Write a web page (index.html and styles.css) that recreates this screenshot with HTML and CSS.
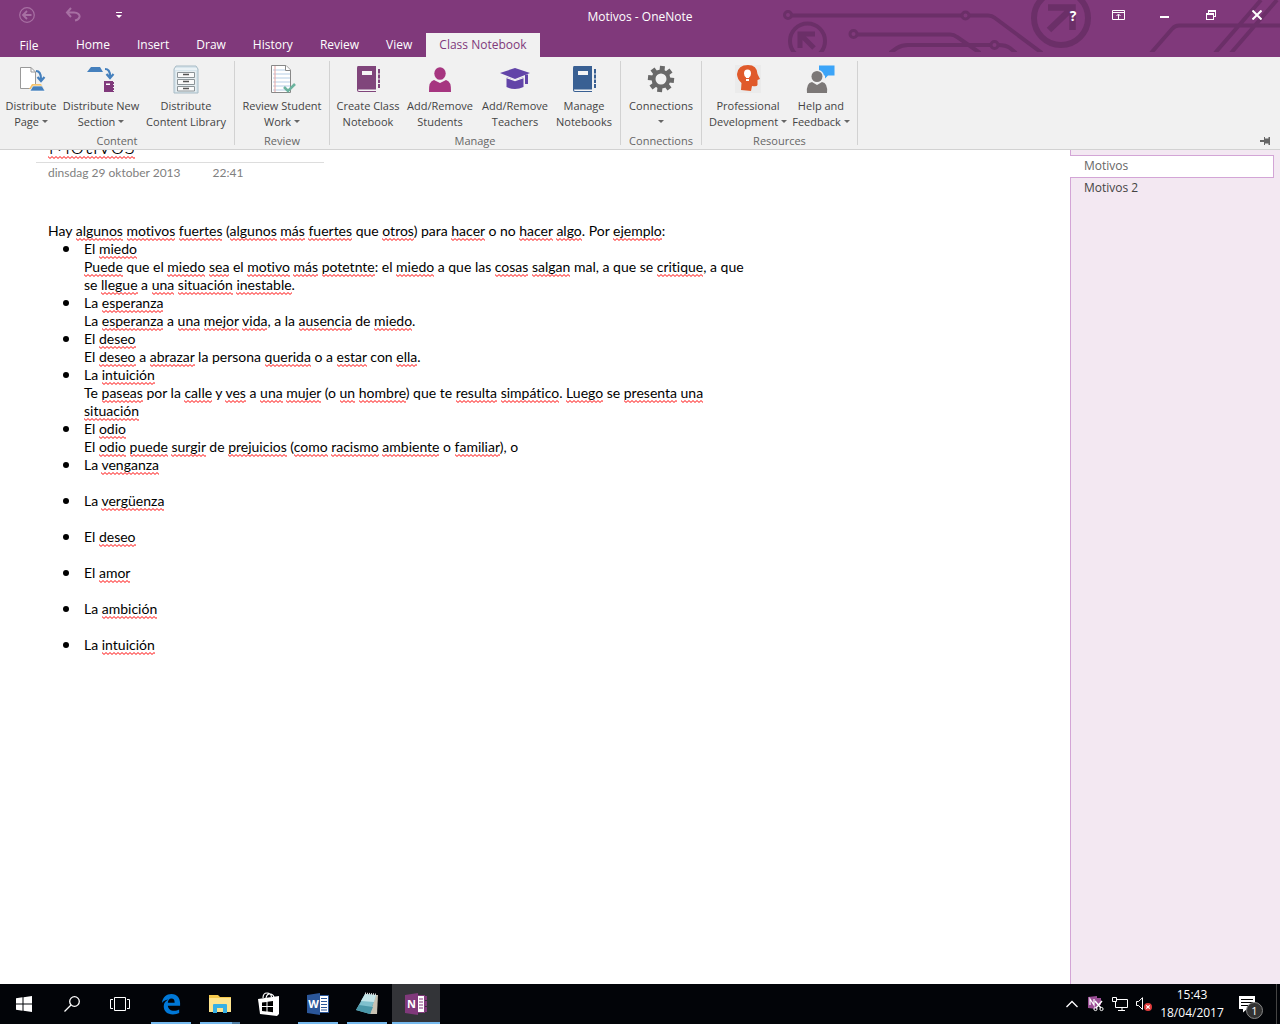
FILE: index.html
```
<!DOCTYPE html>
<html lang="es">
<head>
  <meta charset="UTF-8">
  <meta name="viewport" content="width=device-width, initial-scale=1.0">
  <title>Motivos - OneNote</title>
  <link rel="stylesheet" href="styles.css">
</head>
<body>
  <header class="window-header">
    <svg class="circuit" width="500" height="52" viewBox="780 0 500 52" fill="none" stroke="#6b2f68" stroke-width="4">
      <circle cx="788" cy="15" r="3.5" stroke-width="3"/>
      <path d="M792 15.500H961M969 15.500H988Q992 15.500 995 18L1042 53"/>
      <circle cx="965.500" cy="15.500" r="3.500" stroke-width="3"/>
      <circle cx="853.500" cy="34" r="3.500" stroke-width="3"/>
      <path d="M857 34.500H950Q954 34.500 957 37L980 53"/>
      <path d="M890 53L897 48Q902 45 908 45H990M998 45Q1006 45 1010 48L1016 53"/>
      <circle cx="994.500" cy="45" r="3.500" stroke-width="3"/>
      <circle cx="807.500" cy="41" r="17.500"/>
      <path d="M800 48V34H815M801 35L814 48" stroke-width="5"/>
      <circle cx="1061" cy="18" r="27" stroke-width="6"/>
      <path d="M1048 7.500H1072.500V30M1072 8L1049 30" stroke-width="6.500"/>
      <path d="M1151 53L1172 29Q1175 25.500 1179 25.500H1280M1215 53L1261 0M1231 53L1277 0"/>
    </svg>
    <div class="title-bar">
      <div class="quick-access">
        <button class="bar-button" type="button" aria-label="Back">
          <svg width="16" height="16" viewBox="0 0 16 16" fill="none" stroke="#a770a3"><circle cx="8" cy="8" r="7.300" stroke-width="1.200"/><path d="M12.500 8H4.500M8 4L4 8L8 12" stroke-width="1.800"/></svg>
        </button>
        <button class="bar-button" type="button" aria-label="Undo">
          <svg width="16" height="16" viewBox="0 0 16 16" fill="none" stroke="#a770a3" stroke-width="2"><path d="M6 1L2 5.500L6 10M2 5.500H9C13 5.500 15 8 14.500 10C14 12 12.500 13 10 13.500"/></svg>
        </button>
        <button class="bar-button" type="button" aria-label="Customize Quick Access Toolbar">
          <svg width="6" height="6" viewBox="0 0 6 6" fill="#fff"><path d="M0 0H6V1H0zM0 3H6L3 6z"/></svg>
        </button>
      </div>
      <h1 class="window-title">Motivos - OneNote</h1>
      <div class="window-buttons">
        <button class="bar-button help" type="button">?</button>
        <button class="bar-button" type="button" aria-label="Ribbon Display Options">
          <svg width="14" height="10" viewBox="0 0 14 10" fill="none" stroke="#fff"><path d="M.5.500H12.500V9.500H.5zM0 2.500H13M6.500 9V4.500M4.500 6L6.500 4L8.500 6"/></svg>
        </button>
        <button class="bar-button" type="button" aria-label="Minimize">
          <svg width="10" height="10" viewBox="0 0 10 10" fill="#fff"><path d="M0 6H9V8H0z"/></svg>
        </button>
        <button class="bar-button" type="button" aria-label="Restore Down">
          <svg width="10" height="10" viewBox="0 0 10 10" fill="#fff"><path d="M2 0H10V7H8V6H9V2H3V3H2zM0 3H8V10H0zM1 5V9H7V5z" fill-rule="evenodd"/></svg>
        </button>
        <button class="bar-button" type="button" aria-label="Close">
          <svg width="10" height="10" viewBox="0 0 10 10" stroke="#fff" stroke-width="2"><path d="M.5.500L9.500 9.500M9.500.500L.5 9.500"/></svg>
        </button>
      </div>
    </div>
    <nav class="tabs">
      <button class="tab file" type="button">File</button>
      <button class="tab" type="button">Home</button>
      <button class="tab" type="button">Insert</button>
      <button class="tab" type="button">Draw</button>
      <button class="tab" type="button">History</button>
      <button class="tab" type="button">Review</button>
      <button class="tab" type="button">View</button>
      <button class="tab active" type="button">Class Notebook</button>
    </nav>
  </header>

  <section class="ribbon">
    <div class="group content">
      <div class="commands">
        <button class="command" type="button">
          <svg width="30" height="30" viewBox="0 0 30 30"><path d="M4.500 2.500H15L19.500 7V23.500H4.500z" fill="#fff" stroke="#999"/><path d="M15 2.500V7H19.500" fill="none" stroke="#999"/><path d="M20 6Q25 6 25 14M21.500 12L25 16L28.500 12" fill="none" stroke="#4580bd" stroke-width="2.200"/><path d="M16 19H25L28 24H13z" fill="#f5c36b"/><path d="M17 21H26L29 26H14z" fill="#4580bd" stroke="#fff" stroke-width=".6"/></svg>
          <span>Distribute<br>Page <i class="arrow"></i></span>
        </button>
        <button class="command" type="button">
          <svg width="30" height="30" viewBox="0 0 30 30"><path d="M5 2H14L17 7H1z" fill="#4580bd"/><path d="M19 4Q24 4 24 11M20.500 9L24 13L27.500 9" fill="none" stroke="#4580bd" stroke-width="2.200"/><path d="M18 16H27V27H18z" fill="#80397b"/><path d="M20 18.500H24V20H20z" fill="#fff"/><path d="M27.500 17V27" stroke="#80397b" stroke-dasharray="2 1"/></svg>
          <span>Distribute New<br>Section <i class="arrow"></i></span>
        </button>
        <button class="command" type="button">
          <svg width="30" height="30" viewBox="0 0 30 30"><path d="M5 1H25L27 4V28H3V4z" fill="#d7e5ec" stroke="#a9bcc6"/><path d="M4 4H26" stroke="#fff"/><path d="M5 6H25V27H5z" fill="#e7eef1"/><path d="M6.500 7.500H23.500V12.500H6.500zM6.500 14.500H23.500V19.500H6.500zM6.500 21.500H23.500V26H6.500z" fill="#fafafa" stroke="#8c9498"/><path d="M12 9.500H18M12 16.500H18M12 23.500H18" stroke="#555" stroke-width="1.500"/></svg>
          <span>Distribute<br>Content Library</span>
        </button>
      </div>
      <h2 class="group-name">Content</h2>
    </div>
    <div class="group review">
      <div class="commands">
        <button class="command" type="button">
          <svg width="30" height="30" viewBox="0 0 30 30"><path d="M4.500.500H19L23.500 5V27.500H4.500z" fill="#fff" stroke="#888"/><path d="M6 5H18M6 9H23M6 13H23M6 17H23M6 21H23M6 25H23" stroke="#b5cde5"/><path d="M8 1V27" stroke="#e5a5a5"/><path d="M18.500.500V5.500H23.500" fill="#fff" stroke="#888"/><path d="M17 22L21 26L28 19" fill="none" stroke="#6bb39e" stroke-width="2.600"/></svg>
          <span>Review Student<br>Work <i class="arrow"></i></span>
        </button>
      </div>
      <h2 class="group-name">Review</h2>
    </div>
    <div class="group manage">
      <div class="commands">
        <button class="command" type="button">
          <svg width="30" height="30" viewBox="0 0 30 30"><path d="M5 1H23V27H6Q4 27 4 25V3Q4 1 5 1z" fill="#80457b"/><path d="M9 6H19V10H9zM5 24.500H23V26H6Q5 26 5 24.500z" fill="#f5f5f5"/><path d="M26 4V8.500M26 9.500V13.500M26 14.500V18M26 19V23" stroke="#80457b" stroke-width="2"/></svg>
          <span>Create Class<br>Notebook</span>
        </button>
        <button class="command" type="button">
          <svg width="30" height="30" viewBox="0 0 30 30" fill="#a63680"><ellipse cx="15" cy="8.500" rx="5.700" ry="6.300"/><path d="M4 27Q3.500 16 9 15L15 18L21 15Q26.500 16 26 27z"/></svg>
          <span>Add/Remove<br>Students</span>
        </button>
        <button class="command" type="button">
          <svg width="30" height="30" viewBox="0 0 30 30" fill="#6244a8"><path d="M0 8L15 3L30 8L15 14z"/><path d="M6.500 12L15 15.500L23.500 12V22Q15 26 6.500 22z"/><path d="M25 9.500H28V19H25z"/><path d="M6 12.500L15 15.500L24 12.500" fill="none" stroke="#f1f1f1" stroke-width="1.200"/></svg>
          <span>Add/Remove<br>Teachers</span>
        </button>
        <button class="command" type="button">
          <svg width="30" height="30" viewBox="0 0 30 30"><path d="M5 1H23V27H6Q4 27 4 25V3Q4 1 5 1z" fill="#396093"/><path d="M9 6H19V10H9zM5 24.500H23V26H6Q5 26 5 24.500z" fill="#f5f5f5"/><path d="M26 4V8.500M26 9.500V13.500M26 14.500V18M26 19V23" stroke="#396093" stroke-width="2"/></svg>
          <span>Manage<br>Notebooks</span>
        </button>
      </div>
      <h2 class="group-name">Manage</h2>
    </div>
    <div class="group connections">
      <div class="commands">
        <button class="command" type="button">
          <svg width="30" height="30" viewBox="0 0 30 30" stroke="#696969"><circle cx="15" cy="14" r="7.500" fill="none" stroke-width="4"/><g stroke-width="5"><path d="M16.500 1L16 6M13.500 27L14 22M2 12.500L7 13M28 15.500L23 15M6.500 4L9.500 8M23.500 24L20.500 20M25 5.500L21 8.500M5 22.500L9 19.500"/></g></svg>
          <span>Connections<br><i class="arrow"></i></span>
        </button>
      </div>
      <h2 class="group-name">Connections</h2>
    </div>
    <div class="group resources">
      <div class="commands">
        <button class="command" type="button">
          <svg width="30" height="30" viewBox="0 0 30 30"><path d="M2 0H28V28H2z" fill="#ebebeb"/><path d="M8 25L8.500 18Q4 14 4 9Q5 0 15 0Q24 0 24.500 9L27 14L24.500 15V20Q24 22 19 21L18 26z" fill="#e05a2b"/><path d="M13 12.500Q11 11 11 8.500Q11 4.500 14.500 4.500Q18 4.500 18 8.500Q18 11 16 12.500V16H13z" fill="#fff"/><path d="M13 13.500H16" stroke="#e05a2b"/></svg>
          <span>Professional<br>Development <i class="arrow"></i></span>
        </button>
        <button class="command" type="button">
          <svg width="30" height="30" viewBox="0 0 30 30"><path d="M13 .5H28.500V10.500H22L19 13.500V10.500H18Q17 6 13 5z" fill="#3ba4f8"/><circle cx="11" cy="11.500" r="5.500" fill="#7c7877"/><path d="M1 28Q0 18 6 17L11 20L16 17Q22 18 21 28z" fill="#7c7877"/></svg>
          <span>Help and<br>Feedback <i class="arrow"></i></span>
        </button>
      </div>
      <h2 class="group-name">Resources</h2>
    </div>
    <button class="pin" type="button" aria-label="Pin the ribbon">
      <svg width="10" height="8" viewBox="0 0 10 8" fill="#666"><path d="M0 3H4V0H5V1.500H8.500V0H10V8H8.500V6.500H5V8H4V5H0z"/></svg>
    </button>
  </section>

  <main class="workspace">
    <article class="page">
      <h2 class="page-title"><u>Motivos</u></h2>
      <p class="page-date"><span>dinsdag 29 oktober 2013</span><span>22:41</span></p>
      <div class="note">
        <p>Hay <u>algunos</u> <u>motivos</u> <u>fuertes</u> (<u>algunos</u> <u>más</u> <u>fuertes</u> que <u>otros</u>) para <u>hacer</u> o no <u>hacer</u> <u>algo</u>. Por <u>ejemplo</u>:</p>
        <ul>
          <li>El <u>miedo</u><br><u>Puede</u> que el <u>miedo</u> <u>sea</u> el <u>motivo</u> <u>más</u> <u>potetnte</u>: el <u>miedo</u> a que las <u>cosas</u> <u>salgan</u> mal, a que se <u>critique</u>, a que<br>se <u>llegue</u> a <u>una</u> <u>situación</u> <u>inestable</u>.</li>
          <li>La <u>esperanza</u><br>La <u>esperanza</u> a <u>una</u> <u>mejor</u> <u>vida</u>, a la <u>ausencia</u> de <u>miedo</u>.</li>
          <li>El <u>deseo</u><br>El <u>deseo</u> a <u>abrazar</u> la persona <u>querida</u> o a <u>estar</u> con <u>ella</u>.</li>
          <li>La <u>intuición</u><br>Te <u>paseas</u> por la <u>calle</u> y <u>ves</u> a <u>una</u> <u>mujer</u> (o <u>un</u> <u>hombre</u>) que te <u>resulta</u> <u>simpático</u>. <u>Luego</u> se <u>presenta</u> <u>una</u><br><u>situación</u></li>
          <li>El <u>odio</u><br>El <u>odio</u> <u>puede</u> <u>surgir</u> de <u>prejuicios</u> (<u>como</u> <u>racismo</u> <u>ambiente</u> o <u>familiar</u>), o</li>
          <li class="spaced">La <u>venganza</u></li>
          <li class="spaced">La <u>vergüenza</u></li>
          <li class="spaced">El <u>deseo</u></li>
          <li class="spaced">El <u>amor</u></li>
          <li class="spaced">La <u>ambición</u></li>
          <li>La <u>intuición</u></li>
        </ul>
      </div>
    </article>
    <nav class="page-list">
      <a class="page-link current" href="#">Motivos</a>
      <a class="page-link" href="#">Motivos 2</a>
    </nav>
  </main>

  <footer class="taskbar">
    <button class="task" type="button" aria-label="Start">
      <svg width="16" height="16" viewBox="0 0 16 16" fill="#fff"><path d="M0 2.200L6.500 1.300V7.500H0zM7.500 1.200L16 0V7.500H7.500zM0 8.500H6.500V14.700L0 13.800zM7.500 8.500H16V16L7.500 14.800z"/></svg>
    </button>
    <button class="task" type="button" aria-label="Search">
      <svg width="16" height="16" viewBox="0 0 16 16" fill="none" stroke="#fff" stroke-width="1.300"><circle cx="10.500" cy="5.500" r="4.800"/><path d="M7 9L.5 15.500"/></svg>
    </button>
    <button class="task" type="button" aria-label="Task View">
      <svg width="20" height="14" viewBox="0 0 20 14" fill="none" stroke="#fff"><path d="M4.500.500H15.500V13.500H4.500zM3 2.500H.5V11.500H3M17 2.500H19.500V11.500H17"/></svg>
    </button>
    <div class="apps">
      <button class="task open" type="button" aria-label="Microsoft Edge">
        <svg width="20" height="22" viewBox="0 0 22 24" fill="#0078d7"><path d="M1 11C2 4 6 1 11.500 1C18 1 21 6 21 11V14H7.500C8 18 11 19.500 14 19.500C16.500 19.500 18.500 18.800 20 18V22C18 23 16 23.500 13 23.500C7 23.500 3 20 3 14.500C3 11 5 8.500 8 7C4.500 7.500 2.500 9 1 11zM7.500 10.500H15C15 7.500 14 6 11.500 6C9 6 7.800 8 7.500 10.500z"/></svg>
      </button>
      <button class="task open stacked" type="button" aria-label="File Explorer">
        <svg width="22" height="20" viewBox="0 0 22 20"><path d="M0 1H9L11 3H22V18H0z" fill="#f5c94c"/><path d="M0 4H22V18H0z" fill="#fde48e"/><path d="M4 19V11Q4 10 5 10H17Q18 10 18 11V19H14V14H8V19z" fill="#36b0e4"/></svg>
      </button>
      <button class="task" type="button" aria-label="Store">
        <svg width="22" height="24" viewBox="0 0 22 24"><path d="M5 6Q5 1 9 1Q13 1 13.500 5M8 6Q9 1 13 2Q16 3 16 6" fill="none" stroke="#fff" stroke-width="1.200"/><path d="M0 7L21 4V22L19 24L2 22z" fill="#fff"/><path d="M4 10.500L8.500 10V14H4zM9.500 9.800L15 9V14H9.500zM4 15H8.500V19.500L4 19zM9.500 15H15V20.300L9.500 19.600z" fill="#000"/></svg>
      </button>
      <button class="task open" type="button" aria-label="Word">
        <svg width="22" height="22" viewBox="0 0 22 22"><path d="M12 2.500H21.500V19.500H12z" fill="#fff" stroke="#2b579a"/><path d="M14 5.500H20M14 8.500H20M14 11.500H20M14 14.500H20M14 17H20" stroke="#2b579a"/><path d="M0 2L13 0V22L0 20z" fill="#2b579a"/><text class="app-letter" x="6.500" y="15" text-anchor="middle">W</text></svg>
      </button>
      <button class="task open" type="button" aria-label="Notepad">
        <svg width="24" height="24" viewBox="0 0 24 24"><path d="M20 3L23 3L22 22L15 22z" fill="#c8c2b2"/><path d="M10 2L21 3L15 22L1 18z" fill="#7fc0cd"/><path d="M10 2L21 3L19 10L6 9z" fill="#c4e5e9"/><path d="M4 13L18 15L15 22L1 18z" fill="#4a98a9"/><path d="M10 1.500L21 2.500" stroke="#ddd" stroke-width="2" stroke-dasharray="1 1"/></svg>
      </button>
      <button class="task open selected" type="button" aria-label="OneNote">
        <svg width="22" height="22" viewBox="0 0 22 22"><path d="M12 2.500H19.500V19.500H12z" fill="#fff" stroke="#80397b"/><path d="M14 6H18M14 9H18M14 12H18M14 15H18" stroke="#80397b"/><path d="M19 3H22V7H19zM19 8H22V13H19zM19 14H22V19H19z" fill="#80397b"/><path d="M0 2L13 0V22L0 20z" fill="#80397b"/><text class="app-letter" x="6.500" y="15" text-anchor="middle">N</text></svg>
      </button>
    </div>
    <div class="tray">
      <button class="tray-button" type="button" aria-label="Show hidden icons">
        <svg width="12" height="8" viewBox="0 0 12 8" fill="none" stroke="#fff" stroke-width="1.300"><path d="M.5 7L6 1.500L11.500 7"/></svg>
      </button>
      <button class="tray-button" type="button" aria-label="Send to OneNote">
        <svg width="16" height="16" viewBox="0 0 16 16"><path d="M0 1L9 0V13L0 12zM9 2H13V9H9z" fill="#9b4f96"/><path d="M2 9V3L6 9V3" fill="none" stroke="#fff" stroke-width="1.200"/><path d="M7 5L13 12M14 5L8 12" stroke="#fff" stroke-width="1.500"/><circle cx="7.500" cy="13" r="1.600" fill="none" stroke="#fff"/><circle cx="13.500" cy="13" r="1.600" fill="none" stroke="#fff"/></svg>
      </button>
      <button class="tray-button" type="button" aria-label="Network">
        <svg width="16" height="14" viewBox="0 0 16 14" fill="none" stroke="#fff"><path d="M5 2.500H15.500V10.500H3.500V5M10 10.500V13M6 13.500H13M.5.500H4.500V4.500H.5z"/></svg>
      </button>
      <button class="tray-button" type="button" aria-label="Volume muted">
        <svg width="16" height="14" viewBox="0 0 16 14"><path d="M.5 4.500H2.500L6.500.700V12.500L2.500 8.500H.5z" fill="none" stroke="#fff"/><circle cx="12" cy="10" r="4" fill="#e03c3c"/><path d="M10.300 8.300L13.700 11.700M13.700 8.300L10.300 11.700" stroke="#fff" stroke-width="1.200"/></svg>
      </button>
      <time class="clock" datetime="2017-04-18T15:43">15:43<br>18/04/2017</time>
      <button class="notifications" type="button" aria-label="Notifications">
        <svg width="24" height="24" viewBox="0 0 24 24"><path d="M0 4H16V17H8L4 20.500V17H0z" fill="#fff"/><path d="M2 7.500H14M2 10.500H14M2 13.500H10" stroke="#000"/></svg>
        <span class="badge">1</span>
      </button>
    </div>
  </footer>
</body>
</html>
```
FILE: styles.css
```
* {
  box-sizing: border-box;
}
body {
  margin: 0;
  height: 100vh;
  display: flex;
  flex-direction: column;
  font-family: "Open Sans", "Noto Sans", sans-serif;
  font-size: 12px;
  color: #444;
  background: #fff;
  overflow: hidden;
}
button {
  font: inherit;
  color: inherit;
  background: none;
  border: none;
  padding: 0;
  white-space: nowrap;
}
h1, h2, p, ul {
  margin: 0;
  font-weight: normal;
}
svg {
  display: block;
  flex: none;
}

/* title bar and tabs */
.window-header {
  position: relative;
  background: #80397b;
  color: #fff;
}
.circuit {
  position: absolute;
  top: 0;
  right: 0;
}
.title-bar {
  position: relative;
  display: grid;
  grid-template-columns: 1fr auto 1fr;
  align-items: center;
  height: 33px;
}
.quick-access, .window-buttons {
  display: flex;
  height: 30px;
  align-self: start;
}
.quick-access {
  padding-left: 4px;
}
.window-buttons {
  justify-content: flex-end;
}
.bar-button {
  width: 46px;
  display: flex;
  align-items: center;
  justify-content: center;
}
.help {
  font-size: 14px;
  font-weight: bold;
}
.window-title {
  font-size: 12px;
}
.tabs {
  position: relative;
  display: flex;
  gap: 1px;
  height: 24px;
}
.tab {
  padding: 0 13px 2px;
}
.tab.file {
  width: 58px;
  margin-right: 4px;
  padding-bottom: 0;
}
.tab.active {
  background: #f1f1f1;
  color: #80397b;
}

/* ribbon */
.ribbon {
  display: flex;
  padding-top: 4px;
  background: #f1f1f1;
  border-bottom: 1px solid #d2d2d2;
}
.group {
  border-right: 1px solid #d2d2d2;
  height: 84px;
  margin-bottom: 4px;
}
.commands {
  display: grid;
  height: 72px;
  padding-top: 4px;
}
.content .commands {
  grid-template-columns: 56px 84px 86px;
  padding-left: 3px;
  padding-right: 5px;
}
.review .commands {
  grid-template-columns: 94px;
}
.manage .commands {
  grid-template-columns: 72px 72px 78px 60px;
  padding-left: 2px;
  padding-right: 6px;
}
.connections .commands {
  grid-template-columns: 80px;
}
.resources .commands {
  grid-template-columns: 84px 62px;
  padding-left: 4px;
  padding-right: 5px;
}
.command {
  display: flex;
  flex-direction: column;
  align-items: center;
  gap: 3px;
  font-size: 11px;
  line-height: 16px;
}
.arrow {
  display: inline-block;
  vertical-align: 3px;
  border: 3px solid transparent;
  border-top-color: #666;
  border-bottom: none;
}
.group-name {
  font-size: 11px;
  line-height: 16px;
  text-align: center;
  color: #666;
}
.pin {
  margin-left: auto;
  align-self: flex-end;
  padding: 4px 10px;
}

/* page and page list */
.workspace {
  flex: 1;
  min-height: 0;
  display: flex;
  overflow: hidden;
}
.page {
  flex: 1;
  margin-top: -24px;
  padding-left: 48px;
  color: #000;
  font-family: Lato, sans-serif;
  font-variant-ligatures: none;
}
/* spelling marks */
u {
  text-decoration: none;
  padding-bottom: 2px;
  background: url("data:image/svg+xml,%3Csvg xmlns='http://www.w3.org/2000/svg' width='4' height='3'%3E%3Cpath d='M-1 1.5L0 .5L2 2.5L4 .5L5 1.5' fill='none' stroke='red'/%3E%3C/svg%3E") repeat-x left bottom;
}
.page-title {
  width: 288px;
  margin-left: -12px;
  padding-left: 12px;
  height: 37px;
  border-bottom: 1px solid #ddd;
  font-size: 25px;
  font-weight: 300;
  line-height: 36px;
}
.page-title u {
  padding-bottom: 0;
}
.page-date {
  display: flex;
  gap: 32px;
  padding-top: 1px;
  line-height: 18px;
  color: #808080;
}
.note {
  padding-top: 40px;
  font-size: 14px;
  line-height: 18px;
}
.note ul {
  padding-left: 36px;
  list-style: none;
}
.note li::before {
  content: "";
  display: inline-block;
  width: 6px;
  height: 6px;
  margin-left: -21px;
  margin-right: 15px;
  vertical-align: 2px;
  border-radius: 50%;
  background: #000;
}
.spaced {
  margin-bottom: 18px;
}
.page-list {
  width: 210px;
  padding-top: 5px;
  background: #f3e8f2;
  border-left: 1px solid #d3a5d6;
}
.page-link {
  display: block;
  height: 22px;
  margin-right: 6px;
  padding-left: 13px;
  line-height: 20px;
  color: #444;
  text-decoration: none;
}
.page-link.current {
  height: 23px;
  margin-left: -1px;
  padding-left: 14px;
  color: #666;
  background: #fff;
  border: 1px solid #d3a5d6;
  border-left: none;
}

/* taskbar */
.taskbar {
  display: flex;
  height: 40px;
  background: #020408;
  color: #fff;
}
.task {
  position: relative;
  width: 48px;
  display: flex;
  align-items: center;
  justify-content: center;
}
.apps {
  display: flex;
  gap: 1px;
  margin-left: 3px;
}
.open::after {
  content: "";
  position: absolute;
  bottom: 0;
  left: 4px;
  right: 4px;
  height: 2px;
  background: #76b9ed;
}
.stacked::after {
  border-right: 8px solid #4f7da3;
}
.selected {
  background: #333438;
}
.selected::after {
  left: 0;
  right: 0;
}
.app-letter {
  font-size: 11px;
  font-weight: bold;
  fill: #fff;
}
.tray {
  display: flex;
  margin-left: auto;
  margin-right: 3px;
  border-right: 1px solid #444;
}
.tray-button {
  width: 24px;
  display: flex;
  align-items: center;
  justify-content: center;
}
.clock {
  width: 72px;
  padding-top: 2px;
  line-height: 18px;
  text-align: center;
}
.notifications {
  position: relative;
  width: 48px;
  padding-left: 11px;
}
.badge {
  position: absolute;
  top: 18px;
  left: 18px;
  width: 17px;
  height: 17px;
  border: 1px solid #888;
  border-radius: 50%;
  background: #333;
  font-size: 11px;
  line-height: 15px;
}
```
